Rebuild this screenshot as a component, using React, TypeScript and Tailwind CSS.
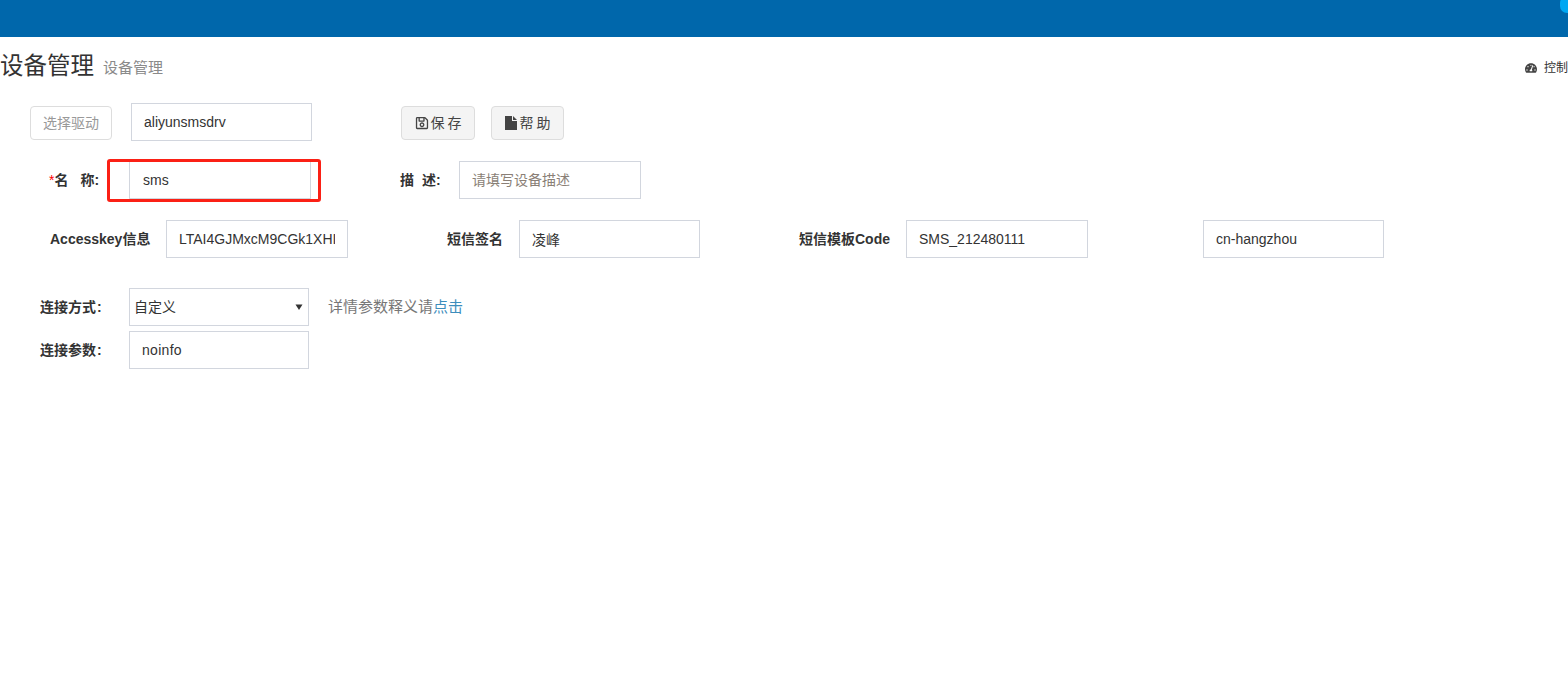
import React from "react";
import { FaTachometerAlt, FaRegSave } from "react-icons/fa";

const field = "h-[38px] border border-[#d2d6de] bg-white px-3 text-[14px] text-[#333] outline-none placeholder:text-[#8a7f76]";
const label = "font-bold text-[14px] text-[#333] whitespace-nowrap";
const btn = "mt-[3px] flex h-[34px] items-center justify-center self-start rounded border border-[#ddd] bg-[#f4f4f4] text-[14px] text-[#444]";

export default function App() {
  return (
    <div
      className="relative h-[700px] w-[1568px] overflow-hidden bg-white text-[#333]"
      style={{ fontFamily: '"Liberation Sans", "Noto Sans CJK SC", sans-serif' }}
    >
      <header className="relative h-[37px] bg-[#0067ab]">
        <span className="absolute right-[-6px] top-[-4px] h-[17px] w-[14px] rounded-full bg-[#00a7f2]" />
      </header>

      <div className="mt-[13px] flex h-[32px] items-center">
        <h1 className="text-[23.5px] font-normal leading-[32px] text-[#333]">设备管理</h1>
        <small className="ml-[9px] mt-[5px] text-[15px] text-[#8a8a8a]">设备管理</small>
        <div className="ml-auto mt-[4px] flex items-center gap-[7px] text-[12px] text-[#333]">
          <FaTachometerAlt className="h-[12px] w-[12px] text-[#444]" />
          <span className="whitespace-nowrap">控制</span>
        </div>
      </div>

      <section className="ml-[30px] mt-[21px] flex items-center">
        <button className="mt-[3px] flex h-[34px] w-[82px] items-center justify-center self-start rounded border border-[#ddd] bg-white text-[14px] text-[#999]">选择驱动</button>
        <input readOnly value="aliyunsmsdrv" className={`${field} ml-[19px] w-[181px]`} />
        <button className={`${btn} ml-[89px] w-[74px] gap-[2px]`}>
          <FaRegSave className="h-[14px] w-[14px]" />
          <span className="mr-[-3px] tracking-[3px]">保存</span>
        </button>
        <button className={`${btn} ml-[16px] w-[73px] gap-[3px]`}>
          <svg width="12" height="14" viewBox="0 0 12 14" className="fill-[#444]">
            <path d="M0 0h7v5h5v9H0zM8 0l4 4H8z" />
          </svg>
          <span className="mr-[-3px] tracking-[3px]">帮助</span>
        </button>
      </section>

      <section className="mt-[20px] flex items-center">
        <div className={`${label} ml-[49px] w-[80px]`}>
          <span className="font-normal text-[#f00]">*</span>名<span className="ml-[12px]">称:</span>
        </div>
        <input readOnly value="sms" className={`${field} w-[182px] pl-[13px]`} />
        <div className={`${label} ml-[89px] w-[59px]`}>描<span className="ml-[8px]">述:</span></div>
        <input readOnly placeholder="请填写设备描述" className={`${field} w-[182px]`} />
      </section>

      <section className="mt-[21px] flex items-center">
        <div className={`${label} ml-[50px] w-[116px]`}>Accesskey信息</div>
        <input readOnly value="LTAI4GJMxcM9CGk1XHI" className={`${field} w-[182px]`} />
        <div className={`${label} ml-[99px] w-[72px]`}>短信签名</div>
        <input readOnly value="凌峰" className={`${field} w-[181px]`} />
        <div className={`${label} ml-[99px] w-[107px]`}>短信模板Code</div>
        <input readOnly value="SMS_212480111" className={`${field} w-[182px]`} />
        <input readOnly value="cn-hangzhou" className={`${field} ml-[115px] w-[181px]`} />
      </section>

      <section className="mt-[30px] flex items-center">
        <div className={`${label} ml-[40px] w-[89px]`}>连接方式<span className="ml-[1px]">:</span></div>
        <div className="flex h-[38px] w-[180px] items-center justify-between border border-[#d2d6de] pl-[4px] pr-[5px] text-[14px]">
          <span>自定义</span>
          <svg width="8" height="8" viewBox="0 0 8 8" className="fill-[#333]"><path d="M0.5 1.5h7L4 7z" /></svg>
        </div>
        <p className="ml-[19px] text-[15px] text-[#777]">详情参数释义请<a className="text-[#3c8dbc]">点击</a></p>
      </section>

      <section className="mt-[5px] flex items-center">
        <div className={`${label} ml-[40px] w-[89px]`}>连接参数<span className="ml-[1px]">:</span></div>
        <input readOnly value="noinfo" className={`${field} w-[180px] tracking-[0.3px]`} />
      </section>

      <div className="absolute left-[107px] top-[159px] h-[43px] w-[214px] rounded-[3px] border-[3px] border-[#fb2015]" />
    </div>
  );
}
